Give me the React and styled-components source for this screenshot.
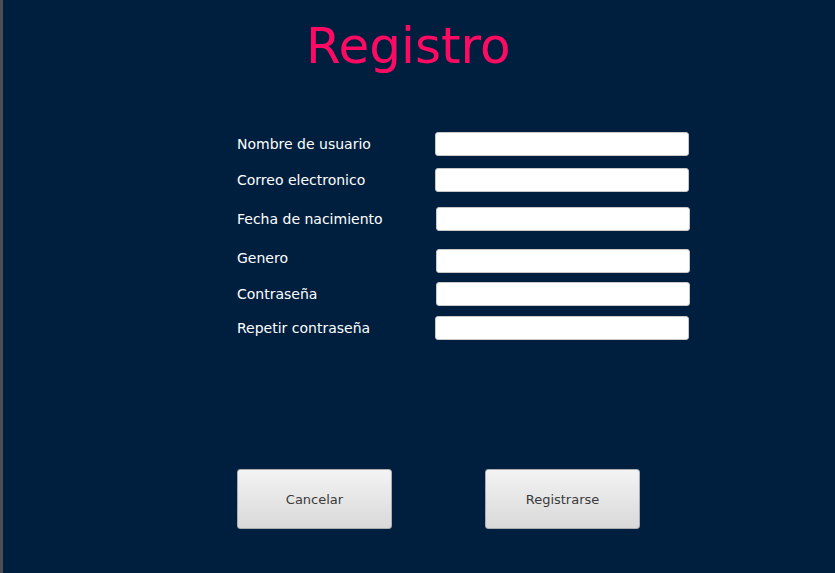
import React from "react";
import styled, { createGlobalStyle } from "styled-components";

const GlobalStyle = createGlobalStyle`
  html, body {
    margin: 0;
    padding: 0;
    background: #001f3f;
  }
  * {
    box-sizing: border-box;
  }
`;

const Page = styled.div`
  min-height: 573px;
  height: 100vh;
  background: #001f3f;
  border-left: 3px solid #4d4f52;
  font-family: "DejaVu Sans", "Liberation Sans", sans-serif;
  display: flex;
  flex-direction: column;
`;

const Title = styled.h1`
  margin: 21px 0 0 303px;
  font-size: 50px;
  font-weight: normal;
  line-height: 50px;
  color: #ff0a63;
`;

const Form = styled.div`
  margin: 61px 0 0 234px;
  width: 456px;
  display: flex;
  flex-direction: column;
`;

const Row = styled.div`
  display: flex;
  align-items: center;
  height: 24px;
  margin-top: ${(p) => p.$top || 0}px;
`;

const Label = styled.label`
  width: ${(p) => 198 + (p.$shift || 0)}px;
  color: #ffffff;
  font-size: 14px;
  position: relative;
  top: ${(p) => p.$lift || 0}px;
`;

const Input = styled.input`
  width: 254px;
  height: 24px;
  border: 1px solid #c8c8c8;
  border-radius: 3px;
  background: #ffffff;
  padding: 0 4px;
  font-family: inherit;
  font-size: 13px;
  outline: none;
`;

const Buttons = styled.div`
  margin: 129px 0 0 234px;
  display: flex;
  gap: 93px;
`;

const Button = styled.button`
  width: 155px;
  height: 60px;
  border: 1px solid #a9acb0;
  border-radius: 3px;
  background: linear-gradient(#f3f3f3, #d9d9d9);
  color: #3a3a3a;
  font-family: "DejaVu Sans", "Liberation Sans", sans-serif;
  font-size: 13px;
  cursor: pointer;
`;

const fields = [
  { label: "Nombre de usuario", top: 0 },
  { label: "Correo electronico", top: 12 },
  { label: "Fecha de nacimiento", top: 15, shift: 1 },
  { label: "Genero", top: 18, shift: 1, lift: -3 },
  { label: "Contraseña", top: 9, shift: 1 },
  { label: "Repetir contraseña", top: 10 },
];

export default function App() {
  return (
    <>
      <GlobalStyle />
      <Page>
        <Title>Registro</Title>
        <Form>
          {fields.map((f) => (
            <Row key={f.label} $top={f.top}>
              <Label $shift={f.shift} $lift={f.lift}>
                {f.label}
              </Label>
              <Input type={f.label.startsWith("Contra") || f.label.startsWith("Repetir") ? "password" : "text"} />
            </Row>
          ))}
        </Form>
        <Buttons>
          <Button>Cancelar</Button>
          <Button>Registrarse</Button>
        </Buttons>
      </Page>
    </>
  );
}
